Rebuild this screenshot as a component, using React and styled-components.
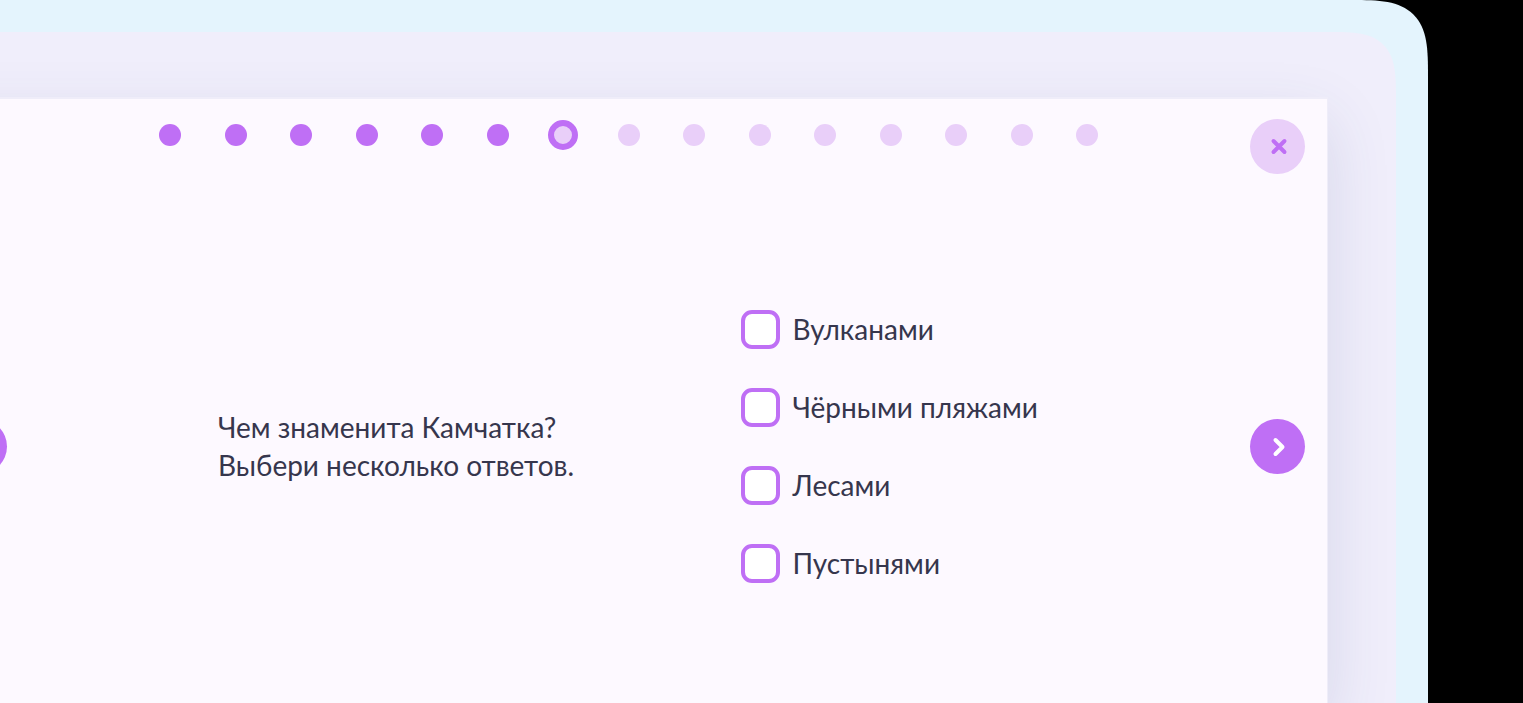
import React, { useState } from "react";
import styled, { createGlobalStyle } from "styled-components";

const color = {
  purple: "#bf6ff5",
  lilac: "#e9cff9",
  card: "#fdf9ff",
  text: "#36364d",
  sky: "#e4f4fd",
  lavender: "#f0eefb",
};

const GlobalStyle = createGlobalStyle`
  *, *::before, *::after { box-sizing: border-box; }
  body {
    margin: 0;
    background: #000;
    color: ${color.text};
    font: 28px/38px Lato, Roboto, sans-serif;
  }
`;

const Page = styled.div`
  display: flex;
  min-height: 100vh;
  padding-right: 95px;
  overflow: hidden;
`;

const Frame = styled.div`
  flex: 1;
  min-width: 0;
  display: flex;
  padding: 32px 32px 0 0;
  background: ${color.sky};
  border-top-right-radius: 50px;

  @supports (corner-shape: squircle) {
    border-top-right-radius: 76px;
    corner-shape: superellipse(1.7);
  }
`;

const Screen = styled.main`
  flex: 1;
  min-width: 0;
  display: flex;
  padding: 65px 68px 0 0;
  background: ${color.lavender};
  border-top-right-radius: 44px;
  overflow: hidden;

  @supports (corner-shape: squircle) {
    border-top-right-radius: 66px;
    corner-shape: superellipse(1.7);
  }
`;

const Card = styled.section`
  flex: 1;
  display: flex;
  flex-direction: column;
  margin-left: -71px;
  padding: 20px 22px 0;
  background: ${color.card};
  background-clip: padding-box;
  border: 1px solid #efedf9;
  border-top-width: 2px;
  border-bottom: 0;
  box-shadow: 0 24px 60px rgba(60, 70, 130, 0.14);
`;

const Row = styled.div`
  display: grid;
  grid-template-columns: 55px minmax(0, 1fr) 55px;
`;

const Header = styled(Row)`
  align-items: start;
`;

const Body = styled(Row)`
  align-items: center;
  flex: 1;
  padding: 136px 0 120px;
`;

const Steps = styled.ol`
  grid-column: 2;
  display: flex;
  justify-content: space-between;
  align-items: center;
  height: 22px;
  margin: 5px 0 0;
  padding: 0 152px;
  list-style: none;
`;

const Step = styled.li`
  flex: none;
  width: ${(p) => (p.$state === "current" ? 30 : 22)}px;
  height: ${(p) => (p.$state === "current" ? 30 : 22)}px;
  margin: ${(p) => (p.$state === "current" ? "0 -4px" : "0")};
  border: ${(p) => (p.$state === "current" ? `6px solid ${color.purple}` : "0")};
  border-radius: 50%;
  background: ${(p) => (p.$state === "done" ? color.purple : color.lilac)};
`;

const RoundButton = styled.button`
  display: flex;
  align-items: center;
  justify-content: center;
  width: 55px;
  height: 55px;
  padding: 0;
  border: 0;
  border-radius: 50%;
  cursor: pointer;
  color: ${(p) => (p.$soft ? color.purple : "#fff")};
  background: ${(p) => (p.$soft ? color.lilac : color.purple)};
`;

const Icon = styled.svg`
  width: 24px;
  height: 24px;
  fill: none;
  stroke: currentColor;
  stroke-width: 4;
  stroke-linecap: round;
  stroke-linejoin: round;
`;

const Task = styled.div`
  display: grid;
  grid-template-columns: 1fr 1fr;
  align-items: center;
`;

const Question = styled.p`
  margin: 0;
  padding: 0 0 2px 211px;
  white-space: nowrap;
`;

const Options = styled.div`
  display: flex;
  flex-direction: column;
  align-items: flex-start;
  gap: 39px;
  padding-left: 112px;
`;

const Option = styled.label`
  display: flex;
  align-items: flex-start;
  height: 39px;
  line-height: 38px;
  gap: 13px;
  cursor: pointer;
`;

const Checkbox = styled.input`
  appearance: none;
  flex: none;
  width: 39px;
  height: 39px;
  margin: 0;
  border: 4px solid ${color.purple};
  border-radius: 11px;
  background: #fff;
  cursor: pointer;

  &:checked {
    background: ${color.purple};
    box-shadow: inset 0 0 0 5px #fff;
  }
`;

const STEP_COUNT = 15;
const CURRENT_STEP = 6;
const answers = ["Вулканами", "Чёрными пляжами", "Лесами", "Пустынями"];

const stepState = (i) =>
  i < CURRENT_STEP ? "done" : i === CURRENT_STEP ? "current" : "next";

export default function App() {
  const [picked, setPicked] = useState([]);
  const toggle = (answer) =>
    setPicked((list) =>
      list.includes(answer) ? list.filter((a) => a !== answer) : [...list, answer]
    );

  return (
    <Page>
      <GlobalStyle />
      <Frame>
        <Screen>
          <Card>
            <Header>
              <Steps>
                {Array.from({ length: STEP_COUNT }, (_, i) => (
                  <Step key={i} $state={stepState(i)} />
                ))}
              </Steps>
              <RoundButton type="button" aria-label="Закрыть" $soft>
                <Icon viewBox="0 0 24 24" aria-hidden="true">
                  <path d="M7.500 6l11 11M18.500 6l-11 11" />
                </Icon>
              </RoundButton>
            </Header>
            <Body>
              <RoundButton type="button" aria-label="Назад">
                <Icon viewBox="0 0 24 24" aria-hidden="true">
                  <path d="M15 5l-7 7 7 7" />
                </Icon>
              </RoundButton>
              <Task>
                <Question id="question">
                  Чем знаменита Камчатка?
                  <br />
                  Выбери несколько ответов.
                </Question>
                <Options role="group" aria-labelledby="question">
                  {answers.map((answer) => (
                    <Option key={answer}>
                      <Checkbox
                        type="checkbox"
                        checked={picked.includes(answer)}
                        onChange={() => toggle(answer)}
                      />
                      {answer}
                    </Option>
                  ))}
                </Options>
              </Task>
              <RoundButton type="button" aria-label="Вперёд">
                <Icon viewBox="0 0 24 24" aria-hidden="true">
                  <path d="M9.500 5l7 7-7 7" />
                </Icon>
              </RoundButton>
            </Body>
          </Card>
        </Screen>
      </Frame>
    </Page>
  );
}
